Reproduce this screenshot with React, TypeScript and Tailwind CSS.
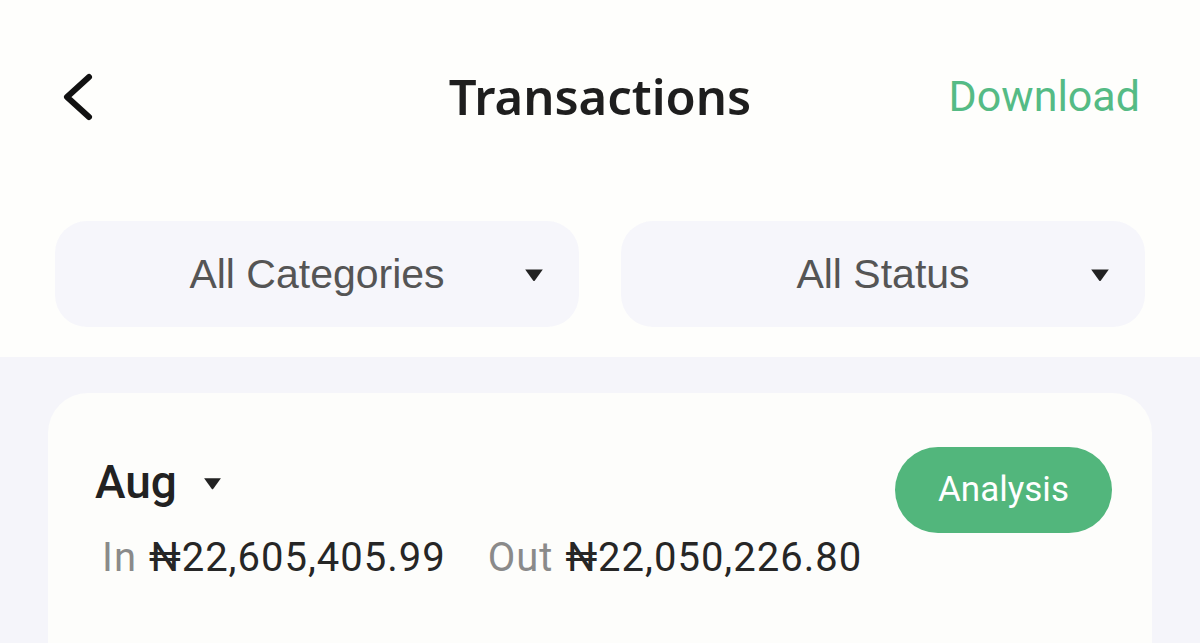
import React from "react";

/** Small solid down-pointing caret used in the dropdowns. */
function Caret({ className = "" }: { className?: string }) {
  return (
    <svg viewBox="0 0 20 14" className={className} fill="#222">
      <path d="M2 2 H18 L10.8 12 Q10 13 9.2 12 Z" strokeLinejoin="round" />
    </svg>
  );
}

function FilterPill({ label }: { label: string }) {
  return (
    <div className="relative flex h-[106px] flex-1 items-center justify-center rounded-[32px] bg-[#f6f6fb]">
      <span className="font-['Liberation_Sans',Arial,sans-serif] text-[41px] leading-[48px] text-[#555]">
        {label}
      </span>
      <Caret className="absolute right-[34px] top-[46px] h-[16px] w-[22px]" />
    </div>
  );
}

export default function App() {
  return (
    <div className="h-[643px] w-[1200px] overflow-hidden bg-[#fefefc] font-['Roboto',sans-serif]">
      {/* Header */}
      <div className="flex h-[194px] items-start px-[60px] pt-[70px]">
        <div className="flex w-[200px] items-center">
          <svg viewBox="0 0 40 50" className="mt-[2px] h-[50px] w-[40px]" fill="none" stroke="#111" strokeWidth="6" strokeLinecap="round" strokeLinejoin="round">
            <path d="M29 5 L7 25 L29 45" />
          </svg>
        </div>
        <div className="flex-1 text-center font-['Noto_Sans',sans-serif] text-[49px] font-semibold leading-[52px] text-[#1e1e1e]">
          Transactions
        </div>
        <div className="flex w-[200px] justify-end pt-[2px]">
          <span className="whitespace-nowrap text-[43px] leading-[48px] text-[#55bb85]">Download</span>
        </div>
      </div>

      {/* Filters */}
      <div className="flex gap-[42px] px-[55px] pt-[27px] pb-[30px]">
        <FilterPill label="All Categories" />
        <FilterPill label="All Status" />
      </div>

      {/* Month summary */}
      <div className="bg-[#f5f5fa] px-[48px] pt-[36px]">
        <div className="flex h-[300px] items-start justify-between rounded-t-[40px] bg-[#fdfdfb] pl-[47px] pr-[40px] pt-[56px]">
          <div className="flex flex-col">
            <div className="mt-[3px] flex items-center gap-[25px]">
              <span className="text-[46px] font-medium leading-[60px] text-[#222]">Aug</span>
              <Caret className="mt-[2px] h-[15px] w-[21px]" />
            </div>
            <div className="mt-[22px] flex items-center pl-[7px] text-[40px] leading-[48px] tracking-[1px]">
              <span className="text-[#8a8a8a]">In</span>
              <span className="ml-[12px] text-[#262626]">₦22,605,405.99</span>
              <span className="ml-[42px] text-[#8a8a8a]">Out</span>
              <span className="ml-[12px] text-[#262626]">₦22,050,226.80</span>
            </div>
          </div>
          <div className="mt-[-2px] flex h-[86px] w-[217px] items-center justify-center rounded-full bg-[#52b67c] text-[35px] text-white">
            Analysis
          </div>
        </div>
      </div>
    </div>
  );
}
